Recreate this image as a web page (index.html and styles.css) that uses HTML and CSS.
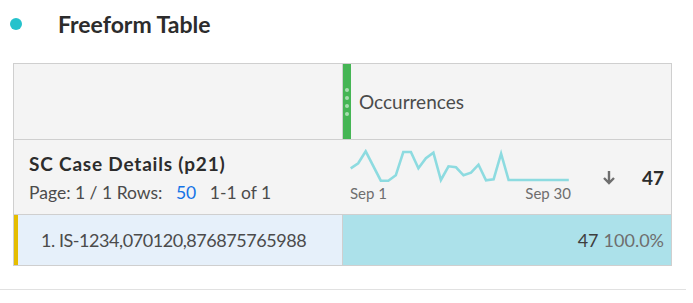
FILE: index.html
```html
<!DOCTYPE html>
<html>
<head>
<meta charset="utf-8">
<link rel="stylesheet" href="styles.css">
</head>
<body>
<div class="title-bar">
  <span class="dot"></span>
  <h1 class="title">Freeform Table</h1>
</div>
<div class="ftable">
  <div class="row head">
    <div class="cell dim-head"></div>
    <div class="cell metric-head">
      <div class="grip"><i></i><i></i><i></i><i></i></div>
      <span class="metric-name">Occurrences</span>
    </div>
  </div>
  <div class="row summary">
    <div class="cell dim-summary">
      <div class="dim-name">SC Case Details (p21)</div>
      <div class="pager">Page: 1 / 1 Rows: <span class="rows">50</span> 1-1 of 1</div>
    </div>
    <div class="cell metric-summary">
      <div class="spark">
        <svg width="222" height="36" viewBox="0 0 222 36">
          <polyline fill="none" stroke="#8ddbe0" stroke-width="2.6" stroke-linejoin="miter" points="1.7,19.3 9.2,14.3 16.7,2.3 31.8,31.7 39.3,31.7 46.8,26.3 54.3,3 61.9,3 69.4,19.3 76.9,9.3 84.4,3.7 91.9,31 99.5,17.3 107,18.3 114.5,26.3 122,23.7 129.5,15.7 137,31.3 144.6,30.3 152.1,4.7 159.6,31 219.8,31"/>
        </svg>
        <div class="spark-labels"><span>Sep 1</span><span>Sep 30</span></div>
      </div>
      <svg class="sort" width="14" height="15" viewBox="0 0 14 15">
        <path d="M7 1 V13 M2 8 L7 13 L12 8" fill="none" stroke="#6e6e6e" stroke-width="2.4"/>
      </svg>
      <span class="total">47</span>
    </div>
  </div>
  <div class="row data">
    <div class="cell dim-item">1. IS-1234,070120,876875765988</div>
    <div class="cell metric-item"><span class="val">47</span> <span class="pct">100.0%</span></div>
  </div>
</div>
<div class="divider"></div>
</body>
</html>
```
FILE: styles.css
```css
* { box-sizing: border-box; }
html, body { margin: 0; padding: 0; background: #fff; }
body {
  font-family: Lato, "Open Sans", sans-serif;
  color: #4b4b4b;
  width: 693px;
  height: 303px;
  overflow: hidden;
}
.title-bar {
  display: flex;
  align-items: center;
  height: 47px;
  padding-left: 10px;
}
.dot {
  width: 12px;
  height: 12px;
  border-radius: 50%;
  background: #25c2cc;
  flex: none;
}
.title {
  margin: 0 0 0 36px;
  font-size: 23px;
  font-weight: 700;
  color: #2c2c2c;
}
.ftable {
  margin: 16px 0 0 13px;
  width: 659px;
  border: 1px solid #cfcfcf;
}
.row {
  display: grid;
  grid-template-columns: 328px 329px;
}
.head { height: 76px; border-bottom: 1px solid #cfcfcf; background: #f4f4f4; }
.summary { height: 75px; border-bottom: 1px solid #cfcfcf; background: #f4f4f4; }
.data { height: 50px; }
.metric-head {
  border-left: 1px solid #cfcfcf;
  display: flex;
  align-items: center;
}
.grip {
  width: 8px;
  align-self: stretch;
  background: #45b554;
  display: flex;
  flex-direction: column;
  align-items: center;
  justify-content: center;
  gap: 4px;
}
.grip i {
  display: block;
  width: 4px;
  height: 4px;
  border-radius: 50%;
  background: #a9ddb0;
}
.metric-name {
  margin-left: 8px;
  font-size: 19px;
  color: #4b4b4b;
}
.dim-summary {
  padding: 12px 0 0 15px;
}
.dim-name {
  font-size: 19px;
  font-weight: 700;
  letter-spacing: 0.8px;
  color: #2c2c2c;
  line-height: 24px;
}
.pager {
  margin-top: 6px;
  font-size: 17.5px;
  line-height: 22px;
  color: #4b4b4b;
}
.rows { color: #1473e6; margin: 0 9px 0 9px; }
.pager-range { letter-spacing: -0.3px; }
.metric-summary {
  display: flex;
  align-items: flex-start;
  padding: 9px 0 0 7px;
}
.spark { width: 222px; }
.spark svg { display: block; }
.spark-labels {
  display: flex;
  justify-content: space-between;
  font-size: 15px;
  line-height: 16px;
  color: #6e6e6e;
  padding-left: 1px;
}
.sort { margin: 21px 0 0 31px; }
.total {
  margin: 17px 0 0 auto;
  padding-right: 7px;
  font-size: 19px;
  font-weight: 700;
  color: #2c2c2c;
}
.dim-item {
  background: #e6f0fa;
  border-left: 4px solid #e5bd00;
  display: flex;
  align-items: center;
  padding-left: 23px;
  font-size: 18px;
  letter-spacing: -0.45px;
  color: #4b4b4b;
}
.metric-item {
  background: #ace1ea;
  border-left: 1px solid #cfcfcf;
  display: flex;
  align-items: center;
  justify-content: flex-end;
  padding-right: 7px;
  font-size: 18px;
}
.val { color: #3e3e3e; margin-right: 5px; }
.pct { color: #6e6e6e; }
.divider {
  margin-top: 23px;
  width: 686px;
  height: 1px;
  background: #e1e1e1;
}
```
